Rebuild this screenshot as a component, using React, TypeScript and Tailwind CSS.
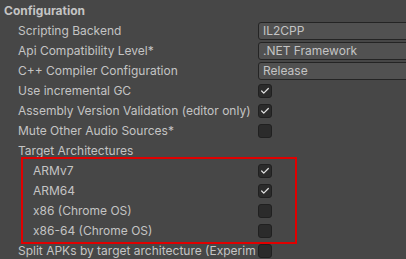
import { Check } from "lucide-react";

type Row =
  | { label: string; kind: "select"; value: string }
  | { label: string; kind: "check"; checked: boolean; indent?: boolean }
  | { label: string; kind: "none" };

const top: Row[] = [
  { label: "Scripting Backend", kind: "select", value: "IL2CPP" },
  { label: "Api Compatibility Level*", kind: "select", value: ".NET Framework" },
  { label: "C++ Compiler Configuration", kind: "select", value: "Release" },
  { label: "Use incremental GC", kind: "check", checked: true },
  { label: "Assembly Version Validation (editor only)", kind: "check", checked: true },
  { label: "Mute Other Audio Sources*", kind: "check", checked: false },
  { label: "Target Architectures", kind: "none" },
];

const archs: Row[] = [
  { label: "ARMv7", kind: "check", checked: true, indent: true },
  { label: "ARM64", kind: "check", checked: true, indent: true },
  { label: "x86 (Chrome OS)", kind: "check", checked: false, indent: true },
  { label: "x86-64 (Chrome OS)", kind: "check", checked: false, indent: true },
];

const bottom: Row[] = [
  { label: "Split APKs by target architecture (Experimental)", kind: "check", checked: false },
];

function Checkbox({ checked }: { checked: boolean }) {
  return (
    <div className="w-[14px] h-[14px] rounded-[3px] bg-[#2b2b2b] border border-[#202020] flex items-center justify-center">
      {checked && <Check size={10} strokeWidth={3} className="text-[#e0e0e0]" />}
    </div>
  );
}

function PropRow({ row }: { row: Row }) {
  const indent = row.kind === "check" && row.indent;
  return (
    <div className="flex items-center h-[20px]">
      <div className={`w-[256px] shrink-0 overflow-hidden whitespace-nowrap ${indent ? "pl-[33px]" : "pl-[18px]"}`}>
        {row.label}
      </div>
      <div className="pl-[2px] flex-1 flex items-center">
        {row.kind === "select" && (
          <div className="flex-1 h-[18px] mr-[-4px] rounded-[3px] bg-[#515151] border border-[#242424] pl-[4px] flex items-center">
            {row.value}
          </div>
        )}
        {row.kind === "check" && <Checkbox checked={row.checked} />}
      </div>
    </div>
  );
}

export default function App() {
  return (
    <div
      className="w-[406px] h-[259px] overflow-hidden bg-[#474747] text-[#c4c4c4] text-[12px] leading-[14px]"
      style={{ fontFamily: "Inter, 'Noto Sans', sans-serif" }}
    >
      <div className="h-[21px] pl-[4px] flex items-center font-bold">Configuration</div>
      {top.map((r) => (
        <PropRow key={r.label} row={r} />
      ))}
      <div className="relative">
        {archs.map((r) => (
          <PropRow key={r.label} row={r} />
        ))}
        <div className="absolute left-[21px] top-[-4px] w-[276px] h-[87px] border-2 border-[#e00000] pointer-events-none" />
      </div>
      {bottom.map((r) => (
        <PropRow key={r.label} row={r} />
      ))}
    </div>
  );
}
